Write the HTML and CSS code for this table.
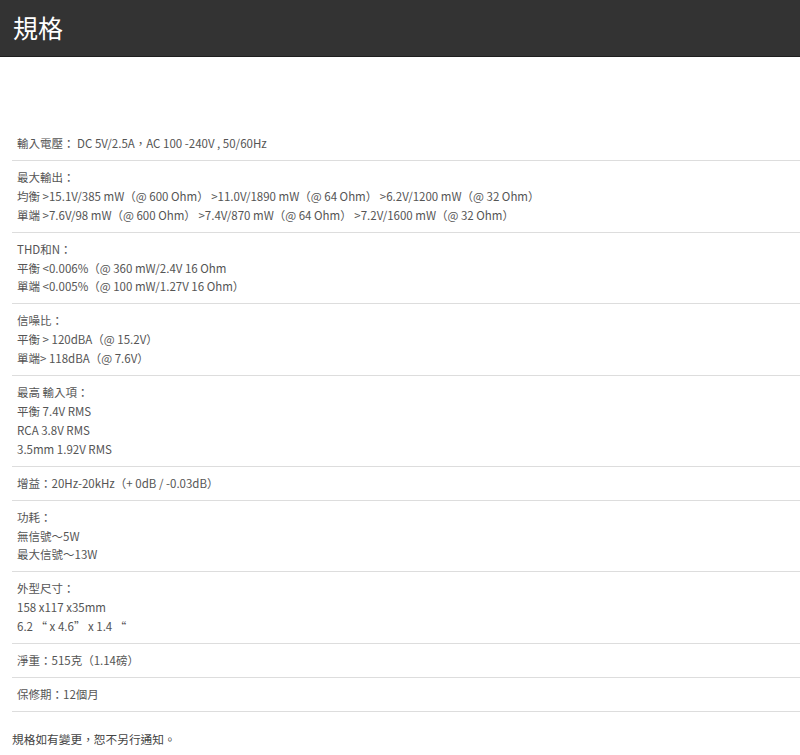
FILE: index.html
```html
<!DOCTYPE html>
<html lang="zh-Hant">
<head>
<meta charset="utf-8">
<link rel="stylesheet" href="styles.css">
</head>
<body>
<header class="bar"><h1 class="title">規格</h1></header>
<main class="specs">
  <div class="row"><p>輸入電壓： DC 5V/2.5A，AC 100 -240V , 50/60Hz</p></div>
  <div class="row"><p>最大輸出：<br>均衡 &gt;15.1V/385 mW（@ 600 Ohm） &gt;11.0V/1890 mW（@ 64 Ohm） &gt;6.2V/1200 mW（@ 32 Ohm）<br>單端 &gt;7.6V/98 mW（@ 600 Ohm） &gt;7.4V/870 mW（@ 64 Ohm） &gt;7.2V/1600 mW（@ 32 Ohm）</p></div>
  <div class="row"><p>THD和N：<br>平衡 &lt;0.006%（@ 360 mW/2.4V 16 Ohm<br>單端 &lt;0.005%（@ 100 mW/1.27V 16 Ohm）</p></div>
  <div class="row"><p>信噪比：<br>平衡 &gt; 120dBA（@ 15.2V）<br>單端&gt; 118dBA（@ 7.6V）</p></div>
  <div class="row"><p>最高 輸入項：<br>平衡 7.4V RMS<br>RCA 3.8V RMS<br>3.5mm 1.92V RMS</p></div>
  <div class="row"><p>增益：20Hz-20kHz（+ 0dB / -0.03dB）</p></div>
  <div class="row"><p>功耗：<br>無信號～5W<br>最大信號～13W</p></div>
  <div class="row"><p>外型尺寸：<br>158 x117 x35mm<br>6.2 “ x 4.6” x 1.4 “</p></div>
  <div class="row"><p>淨重：515克（1.14磅）</p></div>
  <div class="row"><p>保修期：12個月</p></div>
  <p class="note">規格如有變更，恕不另行通知。</p>
</main>
</body>
</html>
```
FILE: styles.css
```css
* { box-sizing: border-box; }
html, body { margin: 0; padding: 0; background: #fff; }
body {
  font-family: "Noto Sans CJK TC", sans-serif;
  color: #555;
}
.bar {
  height: 57px;
  background: #333;
  border-bottom: 1px solid #1e1e1e;
  display: flex;
  align-items: center;
  padding-left: 13px;
}
.title {
  margin: 0 0 2px;
  font-weight: 400;
  font-size: 25px;
  color: #fff;
  line-height: 1;
}
.specs {
  padding: 70px 0 0 12px;
}
.row {
  border-bottom: 1px solid #ddd;
  padding: 7px 0 7px 5px;
}
.row p {
  margin: 0;
  font-size: 11.5px;
  line-height: 18.9px;
}
.note {
  margin: 18px 0 0;
  font-size: 11.7px;
  line-height: 18px;
  color: #444;
}
```
